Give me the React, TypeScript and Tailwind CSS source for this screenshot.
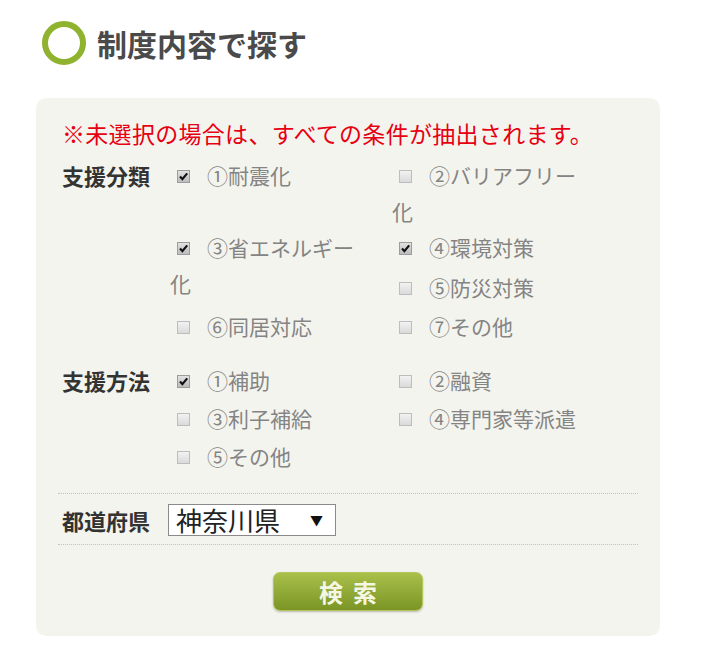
const Box = ({ checked }: { checked?: boolean }) => (
  <span
    className={
      checked
        ? "relative inline-block w-[13px] h-[13px] ml-[7px] mr-[17px] align-middle -mt-[3px] border border-[#9c9c9c] bg-gradient-to-b from-[#e2e2e2] to-[#bcbcbc]"
        : "relative inline-block w-[13px] h-[13px] ml-[7px] mr-[17px] align-middle -mt-[3px] border border-[#bdbdbd] bg-gradient-to-b from-[#f2f2f2] to-[#dadada]"
    }
  >
    {checked && (
      <svg viewBox="0 0 11 11" className="absolute left-0 top-0 w-[11px] h-[11px]">
        <path d="M2 5.6 L4.4 8.2 L9.2 2.4" fill="none" stroke="#111" strokeWidth="2.2" />
      </svg>
    )}
  </span>
);

const Opt = ({ label, checked }: { label: string; checked?: boolean }) => (
  <div>
    <Box checked={checked} />
    {label}
  </div>
);

export default function App() {
  return (
    <div className="w-[704px] h-[670px] bg-white font-['Noto_Sans_CJK_JP',sans-serif] pt-[21px] pl-[36px]">
      <div className="flex items-center gap-[11px] pl-[6px] h-[44px]">
        <span className="w-[44px] h-[44px] rounded-full border-[6px] border-[#8fb32e]" />
        <h1 className="text-[30px] font-bold text-[#4a4a4a] leading-none">制度内容で探す</h1>
      </div>

      <div className="mt-[33px] w-[624px] h-[538px] bg-[#f4f4ee] rounded-[10px] px-[22px] pt-[19px]">
        <p className="pl-[4px] text-[23px] tracking-[0.3px] leading-[32px] text-[#e60012]">
          ※未選択の場合は、すべての条件が抽出されます。
        </p>

        <div className="mt-[8px] flex pl-[4px] text-[21px] leading-[36px]">
          <div className="w-[108px] text-[22px] font-bold text-[#333]">支援分類</div>
          <div className="grid grid-cols-[190px_190px] gap-x-[32px] text-[#848484]">
            <Opt label="①耐震化" checked />
            <Opt label="②バリアフリー化" />
            <Opt label="③省エネルギー化" checked />
            <div>
              <Opt label="④環境対策" checked />
              <div className="mt-[4px]">
                <Opt label="⑤防災対策" />
              </div>
            </div>
            <div className="mt-[3px]">
              <Opt label="⑥同居対応" />
            </div>
            <div className="mt-[3px]">
              <Opt label="⑦その他" />
            </div>
          </div>
        </div>

        <div className="mt-[17px] flex pl-[4px] text-[21px] leading-[38px]">
          <div className="w-[108px] text-[22px] font-bold text-[#333]">支援方法</div>
          <div className="grid grid-cols-[190px_190px] gap-x-[32px] text-[#848484]">
            <Opt label="①補助" checked />
            <Opt label="②融資" />
            <Opt label="③利子補給" />
            <Opt label="④専門家等派遣" />
            <Opt label="⑤その他" />
          </div>
        </div>

        <div className="mt-[18px] border-t border-dotted border-[#c4c4bc] pt-[10px] pb-[8px] border-b flex items-center pl-[4px]">
          <div className="w-[106px] text-[22px] font-bold text-[#333] leading-[32px]">都道府県</div>
          <div className="w-[168px] h-[32px] bg-white border border-[#8a8a8a] flex items-center justify-between pl-[7px] pr-[12px]">
            <span className="text-[26px] leading-none text-[#222]">神奈川県</span>
            <span className="text-[13px] text-[#111]">▼</span>
          </div>
        </div>

        <div className="flex justify-center mt-[27px]">
          <button className="w-[150px] h-[39px] rounded-[7px] border border-[#b4c65a] bg-gradient-to-b from-[#a9c04a] to-[#7b9524] text-[#f5f7e4] text-[24px] font-bold tracking-[10px] pl-[10px] leading-none shadow-[0_1px_2px_rgba(0,0,0,0.25)]">
            検索
          </button>
        </div>
      </div>
    </div>
  );
}
